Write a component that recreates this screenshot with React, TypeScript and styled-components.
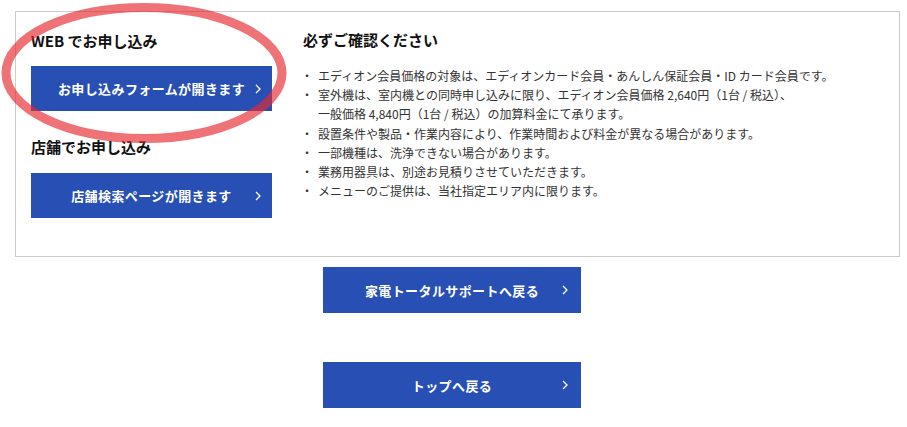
import React from "react";
import styled, { createGlobalStyle } from "styled-components";

const GlobalStyle = createGlobalStyle`
  html, body { margin: 0; padding: 0; background: #fff; }
  body {
    font-family: "Noto Sans CJK JP", "Noto Sans", sans-serif;
    color: #333;
  }
  * { box-sizing: border-box; }
`;

const Page = styled.div`
  position: relative;
  width: 907px;
  padding-top: 11px;
  padding-bottom: 19px;
`;

const Box = styled.section`
  margin-left: 15px;
  width: 885px;
  border: 1px solid #cccccc;
  display: flex;
  padding: 18px 16px 38px 15px;
`;

const LeftCol = styled.div`
  width: 241px;
  flex-shrink: 0;
  display: flex;
  flex-direction: column;
`;

const RightCol = styled.div`
  margin-left: 31px;
  margin-top: -1px;
  flex: 1;
`;

const Heading = styled.h2<{ $gap?: number }>`
  margin: ${(p) => p.$gap ?? 0}px 0 0;
  font-size: 15px;
  line-height: 22px;
  font-weight: 700;
  color: #111;
`;

const Button = styled.a<{ $w: number; $h: number; $gap: number; $chev: number }>`
  position: relative;
  display: flex;
  align-items: center;
  justify-content: center;
  width: ${(p) => p.$w}px;
  height: ${(p) => p.$h}px;
  margin-top: ${(p) => p.$gap}px;
  background: #284fb4;
  color: #fff;
  font-size: 13px;
  font-weight: 700;
  letter-spacing: 0.4px;
  text-decoration: none;

  & > svg {
    position: absolute;
    right: ${(p) => p.$chev}px;
    top: 50%;
    transform: translateY(-50%);
  }
`;

const List = styled.ul`
  margin: 15px 0 0;
  padding: 0;
  list-style: none;
  font-size: 12px;
  line-height: 19.2px;
  color: #333;
`;

const Item = styled.li`
  position: relative;
  padding-left: 15px;

  &::before {
    content: "・";
    position: absolute;
    left: -2px;
    top: 0;
  }
`;

const BottomButtons = styled.div`
  display: flex;
  flex-direction: column;
  align-items: center;
  padding-right: 3px;
`;

const Annotation = styled.svg`
  position: absolute;
  left: 0;
  top: 0;
  pointer-events: none;
`;

const Chevron = () => (
  <svg width="6" height="10" viewBox="0 0 6 10">
    <polyline points="1,1 5,5 1,9" fill="none" stroke="#fff" strokeWidth="1.3" />
  </svg>
);

export default function App() {
  return (
    <>
      <GlobalStyle />
      <Page>
        <Box>
          <LeftCol>
            <Heading>WEB でお申し込み</Heading>
            <Button href="#" $w={241} $h={45} $gap={14} $chev={11}>
              お申し込みフォームが開きます
              <Chevron />
            </Button>
            <Heading $gap={25}>店舗でお申し込み</Heading>
            <Button href="#" $w={241} $h={45} $gap={15} $chev={11}>
              店舗検索ページが開きます
              <Chevron />
            </Button>
          </LeftCol>
          <RightCol>
            <Heading>必ずご確認ください</Heading>
            <List>
              <Item>エディオン会員価格の対象は、エディオンカード会員・あんしん保証会員・ID カード会員です。</Item>
              <Item>
                室外機は、室内機との同時申し込みに限り、エディオン会員価格 2,640円（1台 / 税込）、
                <br />
                一般価格 4,840円（1台 / 税込）の加算料金にて承ります。
              </Item>
              <Item>設置条件や製品・作業内容により、作業時間および料金が異なる場合があります。</Item>
              <Item>一部機種は、洗浄できない場合があります。</Item>
              <Item>業務用器具は、別途お見積りさせていただきます。</Item>
              <Item>メニューのご提供は、当社指定エリア内に限ります。</Item>
            </List>
          </RightCol>
        </Box>
        <BottomButtons>
          <Button href="#" $w={258} $h={46} $gap={10} $chev={13}>
            家電トータルサポートへ戻る
            <Chevron />
          </Button>
          <Button href="#" $w={258} $h={46} $gap={49} $chev={13}>
            トップへ戻る
            <Chevron />
          </Button>
        </BottomButtons>
        <Annotation width="300" height="160" viewBox="0 0 300 160">
          <ellipse
            cx="144"
            cy="73"
            rx="138"
            ry="65.5"
            fill="none"
            stroke="rgba(230,40,45,0.65)"
            strokeWidth="9"
          />
        </Annotation>
      </Page>
    </>
  );
}
